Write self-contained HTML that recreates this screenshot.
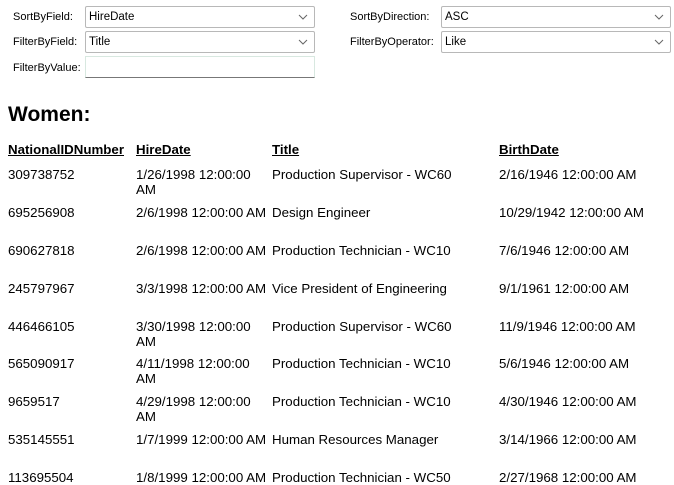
<!DOCTYPE html>
<html><head><style>
body{margin:0;width:674px;height:479px;overflow:hidden;background:#fff;font-family:"Liberation Sans",Arial,sans-serif;color:#000;position:relative}
.l{position:absolute;font-size:11px;line-height:14px}
.s{position:absolute;height:20px;border:1px solid #b8b8b8;border-radius:2px;background:#fff;font-size:11.5px;line-height:20px;padding-left:3px;box-sizing:content-box}
.s svg{position:absolute;right:6px;top:7px}
.t{position:absolute;height:20px;border:1px solid #d8e8e0;border-bottom:1px solid #777;background:#fff}
h1{position:absolute;left:8px;top:103px;margin:0;font-size:21px;font-weight:bold}
.c{position:absolute;font-size:13.3px;line-height:15px}
.h{font-weight:bold;text-decoration:underline}
</style></head><body>
<div class="l" style="left:13px;top:10px">SortByField:</div>
<div class="s" style="left:85px;top:6px;width:225px">HireDate<svg width="10" height="6"><path d="M1 1l4 4 4-4" stroke="#666" fill="none"/></svg></div>
<div class="l" style="left:13px;top:35px">FilterByField:</div>
<div class="s" style="left:85px;top:31px;width:225px">Title<svg width="10" height="6"><path d="M1 1l4 4 4-4" stroke="#666" fill="none"/></svg></div>
<div class="l" style="left:13px;top:61px">FilterByValue:</div>
<div class="t" style="left:85px;top:56px;width:228px"></div>
<div class="l" style="left:350px;top:10px">SortByDirection:</div>
<div class="s" style="left:441px;top:6px;width:225px">ASC<svg width="10" height="6"><path d="M1 1l4 4 4-4" stroke="#666" fill="none"/></svg></div>
<div class="l" style="left:350px;top:35px">FilterByOperator:</div>
<div class="s" style="left:441px;top:31px;width:225px">Like<svg width="10" height="6"><path d="M1 1l4 4 4-4" stroke="#666" fill="none"/></svg></div>
<h1>Women:</h1>
<div class="c h" style="left:8px;top:142px">NationalIDNumber</div>
<div class="c h" style="left:136px;top:142px">HireDate</div>
<div class="c h" style="left:272px;top:142px">Title</div>
<div class="c h" style="left:499px;top:142px">BirthDate</div>
<div id="rows"></div>
<script>
var d=[["309738752","1/26/1998 12:00:00<br>AM","Production Supervisor - WC60","2/16/1946 12:00:00 AM"],
["695256908","2/6/1998 12:00:00 AM","Design Engineer","10/29/1942 12:00:00 AM"],
["690627818","2/6/1998 12:00:00 AM","Production Technician - WC10","7/6/1946 12:00:00 AM"],
["245797967","3/3/1998 12:00:00 AM","Vice President of Engineering","9/1/1961 12:00:00 AM"],
["446466105","3/30/1998 12:00:00<br>AM","Production Supervisor - WC60","11/9/1946 12:00:00 AM"],
["565090917","4/11/1998 12:00:00<br>AM","Production Technician - WC10","5/6/1946 12:00:00 AM"],
["9659517","4/29/1998 12:00:00<br>AM","Production Technician - WC10","4/30/1946 12:00:00 AM"],
["535145551","1/7/1999 12:00:00 AM","Human Resources Manager","3/14/1966 12:00:00 AM"],
["113695504","1/8/1999 12:00:00 AM","Production Technician - WC50","2/27/1968 12:00:00 AM"]];
var tops=[167,205,243,281,319,356,394,432,470],xs=[8,136,272,499],h="";
d.forEach(function(r,i){r.forEach(function(v,j){h+='<div class="c" style="left:'+xs[j]+'px;top:'+tops[i]+'px">'+v+'</div>';});});
document.getElementById("rows").innerHTML=h;
</script>
</body></html>
